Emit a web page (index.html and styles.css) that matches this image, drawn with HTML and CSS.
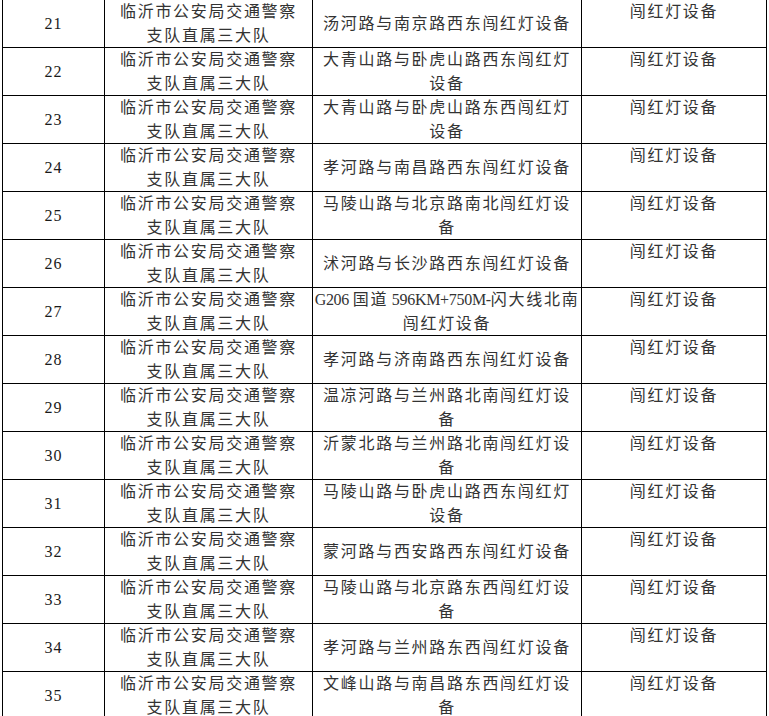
FILE: index.html
```html
<!DOCTYPE html>
<html lang="zh-CN">
<head>
<meta charset="utf-8">
<title>闯红灯设备</title>
<link rel="stylesheet" href="styles.css">
</head>
<body>
<table class="sheet">
  <colgroup>
    <col class="c-no">
    <col class="c-unit">
    <col class="c-loc">
    <col class="c-type">
  </colgroup>
  <tbody>
    <tr><td class="no">21</td><td class="unit">临沂市公安局交通警察支队直属三大队</td><td class="loc">汤河路与南京路西东闯红灯设备</td><td class="type">闯红灯设备</td></tr>
    <tr><td class="no">22</td><td class="unit">临沂市公安局交通警察支队直属三大队</td><td class="loc">大青山路与卧虎山路西东闯红灯设备</td><td class="type">闯红灯设备</td></tr>
    <tr><td class="no">23</td><td class="unit">临沂市公安局交通警察支队直属三大队</td><td class="loc">大青山路与卧虎山路东西闯红灯设备</td><td class="type">闯红灯设备</td></tr>
    <tr><td class="no">24</td><td class="unit">临沂市公安局交通警察支队直属三大队</td><td class="loc">孝河路与南昌路西东闯红灯设备</td><td class="type">闯红灯设备</td></tr>
    <tr><td class="no">25</td><td class="unit">临沂市公安局交通警察支队直属三大队</td><td class="loc">马陵山路与北京路南北闯红灯设备</td><td class="type">闯红灯设备</td></tr>
    <tr><td class="no">26</td><td class="unit">临沂市公安局交通警察支队直属三大队</td><td class="loc">沭河路与长沙路西东闯红灯设备</td><td class="type">闯红灯设备</td></tr>
    <tr><td class="no">27</td><td class="unit">临沂市公安局交通警察支队直属三大队</td><td class="loc wide"><span class="latin">G206 </span>国道<span class="latin"> 596KM+750M-</span>闪大线北南<br>闯红灯设备</td><td class="type">闯红灯设备</td></tr>
    <tr><td class="no">28</td><td class="unit">临沂市公安局交通警察支队直属三大队</td><td class="loc">孝河路与济南路西东闯红灯设备</td><td class="type">闯红灯设备</td></tr>
    <tr><td class="no">29</td><td class="unit">临沂市公安局交通警察支队直属三大队</td><td class="loc">温凉河路与兰州路北南闯红灯设备</td><td class="type">闯红灯设备</td></tr>
    <tr><td class="no">30</td><td class="unit">临沂市公安局交通警察支队直属三大队</td><td class="loc">沂蒙北路与兰州路北南闯红灯设备</td><td class="type">闯红灯设备</td></tr>
    <tr><td class="no">31</td><td class="unit">临沂市公安局交通警察支队直属三大队</td><td class="loc">马陵山路与卧虎山路西东闯红灯设备</td><td class="type">闯红灯设备</td></tr>
    <tr><td class="no">32</td><td class="unit">临沂市公安局交通警察支队直属三大队</td><td class="loc">蒙河路与西安路西东闯红灯设备</td><td class="type">闯红灯设备</td></tr>
    <tr><td class="no">33</td><td class="unit">临沂市公安局交通警察支队直属三大队</td><td class="loc">马陵山路与北京路东西闯红灯设备</td><td class="type">闯红灯设备</td></tr>
    <tr><td class="no">34</td><td class="unit">临沂市公安局交通警察支队直属三大队</td><td class="loc">孝河路与兰州路东西闯红灯设备</td><td class="type">闯红灯设备</td></tr>
    <tr><td class="no">35</td><td class="unit">临沂市公安局交通警察支队直属三大队</td><td class="loc">文峰山路与南昌路东西闯红灯设备</td><td class="type">闯红灯设备</td></tr>
  </tbody>
</table>
</body>
</html>
```

FILE: styles.css
```css
html, body {
  margin: 0;
  padding: 0;
  background: #ffffff;
}

body {
  font-family: "Liberation Serif", "Noto Sans CJK SC", serif;
  font-size: 16px;
  color: #333333;
  overflow: hidden;
}

.sheet {
  border-collapse: collapse;
  table-layout: fixed;
  width: 765px;
  margin: -1px 0 0 2px;
}

.c-no { width: 102px; }
.c-unit { width: 208px; }
.c-loc { width: 269px; }
.c-type { width: 185px; }

.sheet td {
  border: 1px solid #000000;
  height: 47px;
  padding: 0 6px;
  box-sizing: content-box;
  line-height: 23.5px;
  letter-spacing: 1.7px;
  text-align: center;
  vertical-align: middle;
  white-space: normal;
}

.sheet td.no {
  color: #1a1a1a;
  letter-spacing: 1px;
}

.sheet td.unit {
  vertical-align: top;
  padding: 0 7px;
}

.sheet td.loc.wide {
  padding: 0;
  white-space: nowrap;
}

.latin {
  letter-spacing: -0.3px;
}

.sheet td.type {
  vertical-align: top;
}
```
